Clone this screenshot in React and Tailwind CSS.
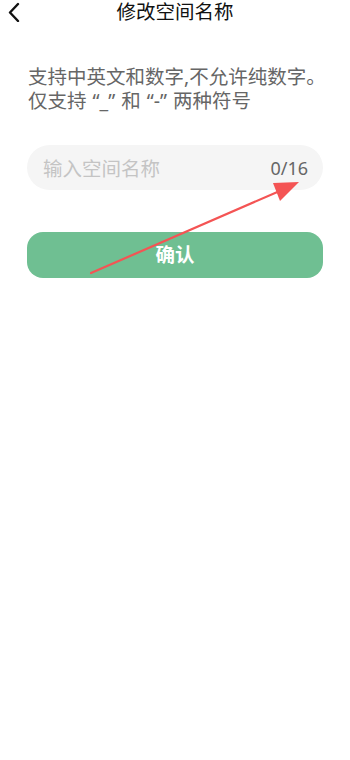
export default function App() {
  const font = { fontFamily: '"Noto Sans", "Noto Sans CJK SC", sans-serif' };
  return (
    <div className="relative w-[350px] h-[760px] bg-white" style={font}>
      <div className="relative h-[24px] flex items-center justify-center">
        <svg className="absolute left-[7px] top-[2px]" width="14" height="20" viewBox="0 0 14 20">
          <path d="M11 2 L3 10.5 L11 19" fill="none" stroke="#111" strokeWidth="2.4" strokeLinecap="round" strokeLinejoin="round" />
        </svg>
        <div className="text-[19.5px] leading-[24px] text-[#111] whitespace-nowrap">修改空间名称</div>
      </div>
      <div className="pl-[28px] pt-[41px] text-[19.5px] leading-[24px] text-[#666] whitespace-nowrap">
        <div>支持中英文和数字,不允许纯数字。</div>
        <div>
          仅支持<span className="ml-[6px]">“</span>_<span className="mr-[6px]">”</span>和<span className="ml-[6px]">“</span>-<span className="mr-[6px]">”</span>两种符号
        </div>
      </div>
      <div className="mx-[27px] mt-[32px] h-[45px] rounded-full bg-[#f5f5f5] flex items-center justify-between pl-[16px] pr-[15px] pt-[2px]">
        <span className="text-[19.5px] text-[#c4c4c4] whitespace-nowrap">输入空间名称</span>
        <span className="text-[18px] text-[#666]">0/16</span>
      </div>
      <div className="mx-[27px] mt-[42px] h-[46px] rounded-[16px] bg-[#6fbf92] flex items-center justify-center">
        <span className="text-[19.5px] font-bold text-white">确认</span>
      </div>
      <svg className="absolute left-0 top-0 pointer-events-none" width="350" height="760" viewBox="0 0 350 760">
        <line x1="91" y1="273" x2="282" y2="190" stroke="#f45454" strokeWidth="2.2" strokeLinecap="round" />
        <polygon points="299,182 273,183 280,201" fill="#f45454" />
      </svg>
    </div>
  );
}
